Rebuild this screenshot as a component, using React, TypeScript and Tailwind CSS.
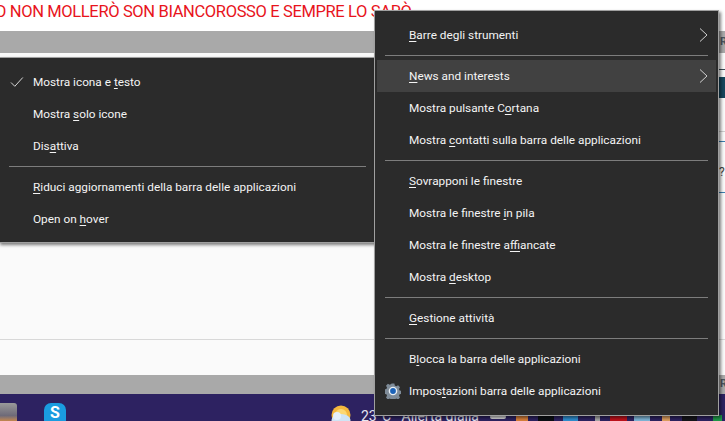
import React from "react";

type Item = {
  before?: string;
  key_?: string;
  after?: string;
  arrow?: boolean;
  check?: boolean;
  gear?: boolean;
  hot?: boolean;
};

type Entry = Item | "sep";

const rightMenu: Entry[] = [
  { before: "", key_: "B", after: "arre degli strumenti", arrow: true },
  "sep",
  { before: "", key_: "N", after: "ews and interests", arrow: true, hot: true },
  { before: "Mostra pulsante C", key_: "o", after: "rtana" },
  { before: "Mostra ", key_: "c", after: "ontatti sulla barra delle applicazioni" },
  "sep",
  { before: "", key_: "S", after: "ovrapponi le finestre" },
  { before: "Mostra le finestre ", key_: "i", after: "n pila" },
  { before: "Mostra le finestre a", key_: "f", after: "fiancate" },
  { before: "Mostra ", key_: "d", after: "esktop" },
  "sep",
  { before: "", key_: "G", after: "estione attività" },
  "sep",
  { before: "B", key_: "l", after: "occa la barra delle applicazioni" },
  { before: "Impos", key_: "t", after: "azioni barra delle applicazioni", gear: true },
];

const leftMenu: Entry[] = [
  { before: "Mostra icona e ", key_: "t", after: "esto", check: true },
  { before: "Mostra ", key_: "s", after: "olo icone" },
  { before: "Dis", key_: "a", after: "ttiva" },
  "sep",
  { before: "", key_: "R", after: "iduci aggiornamenti della barra delle applicazioni" },
  { before: "Open on ", key_: "h", after: "over" },
];

function Gear() {
  return (
    <svg width="16" height="16" viewBox="0 0 16 16" className="absolute left-[10px] top-[8px]">
      <path
        d="M6.6.5h2.8l.4 2 1.5.7 1.8-1 1.9 2-1 1.8.6 1.5 2 .5v2.800l-2 .5-.6 1.500 1 1.800-1.900 2-1.800-1-1.500.700-.4 2H6.600l-.4-2-1.500-.700-1.800 1-1.900-2 1-1.800-.6-1.500-2-.5V6.500l2-.5.6-1.500-1-1.800 1.900-2 1.800 1 1.500-.700z"
        fill="#7f8c99"
      />
      <circle cx="8" cy="8" r="4.300" fill="#e8eef4" />
      <circle cx="8" cy="8" r="2.900" fill="#1b62b8" />
    </svg>
  );
}

function Check() {
  return (
    <svg width="14" height="12" viewBox="0 0 14 12" className="absolute left-[11px] top-[10px]" fill="none">
      <path d="M1 6.500l3.800 3.800L12.800 1.500" stroke="#d8d8d8" strokeWidth="1" />
    </svg>
  );
}

function Chevron({ hot }: { hot?: boolean }) {
  return (
    <svg
      width="9"
      height="14"
      viewBox="0 0 9 14"
      className={`absolute top-[9px] ${hot ? "right-[8px]" : "right-[10px]"}`}
      fill="none"
    >
      <path d="M1 .5l7 6.500-7 6.500" stroke="#d0d0d0" strokeWidth="1" />
    </svg>
  );
}

function MenuList({ entries }: { entries: Entry[] }) {
  return (
    <>
      {entries.map((e, i) =>
        e === "sep" ? (
          <div key={i} className="mx-[10px] my-[4px] h-px bg-[#7d7d7d]" />
        ) : (
          <div
            key={i}
            className={`relative flex h-[32px] items-center whitespace-pre pt-[2px] text-[#f4f4f4] ${
              e.hot ? "mx-[2px] bg-[#414141] pl-[32px]" : "pl-[34px]"
            }`}
          >
            {e.check ? <Check /> : null}
            {e.gear ? <Gear /> : null}
            <span>
              {e.before}
              <span className="underline decoration-1 underline-offset-2">{e.key_}</span>
              {e.after}
            </span>
            {e.arrow ? <Chevron hot={e.hot} /> : null}
          </div>
        )
      )}
    </>
  );
}

function Weather() {
  return (
    <svg width="20" height="24" viewBox="0 0 20 24" className="ml-[265px] mt-[11px] shrink-0">
      <circle cx="10" cy="10" r="9.500" fill="#f5b83d" />
      <circle cx="10" cy="10" r="6" fill="#fcd873" />
      <ellipse cx="10" cy="15" rx="9.500" ry="6" fill="#cfe4f5" />
      <circle cx="6" cy="11" r="4" fill="#e6f1fa" />
    </svg>
  );
}

export default function App() {
  return (
    <div className="relative h-[421px] w-[725px] overflow-hidden bg-[#fafafa] font-['Roboto',sans-serif]">
      {/* pagina dietro */}
      <div className="h-[31px] whitespace-nowrap bg-white pt-[1px] text-[16.500px] leading-[22px] tracking-[-0.36px] text-[#e8141c]">
        <span className="-ml-[5px]">O NON MOLLERÒ SON BIANCOROSSO E SEMPRE LO SARÒ</span>
      </div>
      <div className="flex h-[22px] items-center justify-end bg-[#a9a9a9] text-[11px] font-bold text-[#4b5560]">
        <span className="w-[5px]">R</span>
      </div>
      <div className="flex h-[322px] flex-col items-end">
        <div className="mt-[16px] h-px w-[6px] bg-[#3a4a55]" />
        <div className="mt-[7px] h-[21px] w-[6px] bg-[#16465c]" />
        <div className="mt-[33px] h-px w-[6px] bg-[#cfcfcf]" />
        <div className="mt-[9px] h-px w-[6px] bg-[#3c7fb0]" />
        <div className="mt-[23px] h-[14px] w-[6px] text-[12px] leading-[14px] text-[#444]">?</div>
        <div className="mt-[13px] h-px w-[6px] bg-[#3c7fb0]" />
        <div className="mt-[146px] h-px w-full bg-[#d8d8d8]" />
      </div>
      <div className="flex h-[19px] items-center justify-end bg-[#a9a9a9] text-[11px] font-bold text-[#4b5560]">
        <span className="w-[5px]">R</span>
      </div>
      {/* barra applicazioni */}
      <div className="flex h-[27px] items-start overflow-hidden bg-[#2d2261]">
        <div className="mt-[9px] h-[18px] w-[17px] shrink-0 rounded-tr-[3px] bg-gradient-to-b from-[#9a9a9a] via-[#6e6a78] via-70% to-[#c4864a]" />
        <div className="ml-[27px] mt-[9px] flex h-[24px] w-[22px] shrink-0 items-start justify-center rounded-[7px] bg-[#1a9ce0] text-[16px] font-bold leading-[20px] text-white">
          S
        </div>
        <Weather />
        <div className="ml-[10px] mt-[13px] w-[129px] shrink-0 whitespace-pre text-[14px] leading-[18px] text-[#e6e6f0]">
          23°C   Allerta gialla
        </div>
        <div className="mt-[21px] h-[4px] w-[16px] shrink-0 rounded-sm bg-[#dcdcdc]" />
        <div className="ml-[10px] mt-[21px] h-[6px] w-[12px] shrink-0 bg-[#d9803a]" />
        <div className="ml-[10px] mt-[21px] h-[6px] w-[16px] shrink-0 bg-[#0c0f14]" />
        <div className="ml-[9px] mt-[21px] h-[6px] w-[15px] shrink-0 bg-[#2f8fd0]" />
        <div className="ml-[17px] mt-[21px] h-[6px] w-[5px] shrink-0 bg-[#a8a8a8]" />
        <div className="ml-[10px] mt-[21px] h-[6px] w-[17px] shrink-0 bg-[#c1121c]" />
        <div className="ml-[7px] mt-[21px] h-[6px] w-[16px] shrink-0 bg-[#7fb6d8]" />
        <div className="ml-[12px] mt-[21px] h-[6px] w-[8px] shrink-0 bg-[#e0a060]" />
        <div className="ml-[12px] mt-[21px] h-[6px] w-[15px] shrink-0 bg-[#15151a]" />
        <div className="ml-[16px] mt-[21px] h-[6px] w-[9px] shrink-0 bg-[#1f9a4a]" />
      </div>

      {/* menu sinistro */}
      <div className="absolute left-[-2px] top-[57px] h-[186px] w-[379px] border border-[#a0a0a0] bg-[#2b2b2b] py-[8px] text-[11.800px] shadow-[2px_2px_3px_rgba(0,0,0,0.5)]">
        <MenuList entries={leftMenu} />
      </div>

      {/* menu destro */}
      <div className="absolute left-[374px] top-[10px] h-[406px] w-[345px] border border-[#a0a0a0] bg-[#2b2b2b] py-[8px] text-[11.800px] shadow-[2px_2px_3px_rgba(0,0,0,0.5)]">
        <MenuList entries={rightMenu} />
      </div>
    </div>
  );
}
